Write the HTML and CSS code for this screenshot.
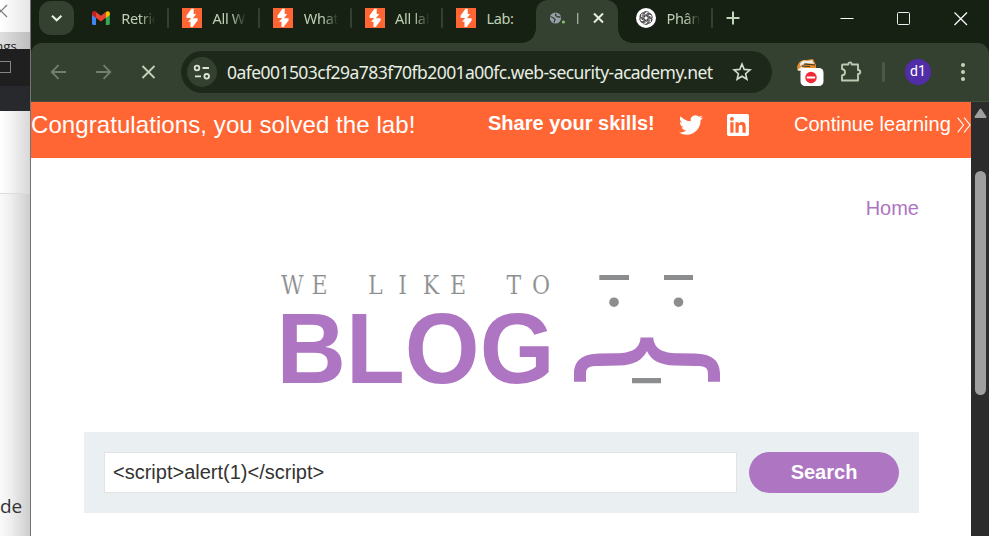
FILE: index.html
```
<!DOCTYPE html>
<html lang="en">
<head>
<meta charset="utf-8">
<title>We like to blog</title>
<link rel="stylesheet" href="styles.css">
</head>
<body>
<svg width="0" height="0" class="defs" aria-hidden="true">
  <symbol id="burp" viewBox="0 0 20 20">
    <rect width="20" height="20" fill="#ff6633"/>
    <path d="M9.5 .8h2.2V6h2.5l-3.2 4.2h4.6v2.3L10.6 19H8.5v-5.2H6l3.2-3.9H4.6V7.6z" fill="#fff"/>
  </symbol>
</svg>
<div class="screen">
  <aside class="behind">
    <div class="behind-tab"><svg width="10" height="20" viewBox="0 0 10 20"><path d="M-5 5 7 17M7 5-5 17" stroke="#777" stroke-width="1.2"/></svg></div>
    <div class="behind-bar"><span>ngs</span></div>
    <div class="behind-dark"><i></i></div>
    <div class="behind-dark2"></div>
    <div class="behind-top"></div>
    <div class="behind-page"><span>de</span></div>
  </aside>
  <main class="window">
    <div class="tabs">
      <div class="menu"><svg width="35" height="34" viewBox="0 0 35 34"><path d="M13 14.7 17.7 19.2 22.4 14.7" fill="none" stroke="#e6eedf" stroke-width="2.2"/></svg></div>
      <div class="tab"><svg class="fav" width="20" height="20" viewBox="0 0 20 20"><path d="M1 5v10.5Q1 17 2.5 17H5V8z" fill="#4285f4"/><path d="M14.8 8v9h2.6q1.4 0 1.4-1.5V5z" fill="#34a853"/><path d="M1 7V5.2C1 3 3.4 2.400 5 3.600V10z" fill="#c5221f"/><path d="M5 4 9.900 7.700 14.800 4V9.700L9.900 13.400 5 9.700z" fill="#ea4335"/><path d="M14.800 4C16.500 2.500 18.800 3 18.800 5.200V7L14.800 10z" fill="#fbbc04"/></svg><span class="title">Retriev</span><i class="sep"></i></div>
      <div class="tab"><svg class="fav" width="20" height="20"><use href="#burp"/></svg><span class="title">All We</span><i class="sep"></i></div>
      <div class="tab"><svg class="fav" width="20" height="20"><use href="#burp"/></svg><span class="title">What</span><i class="sep"></i></div>
      <div class="tab"><svg class="fav" width="20" height="20"><use href="#burp"/></svg><span class="title">All lab</span><i class="sep"></i></div>
      <div class="tab"><svg class="fav" width="20" height="20"><use href="#burp"/></svg><span class="title plain">Lab:</span></div>
      <div class="tab active">
        <svg width="82" height="43" viewBox="0 0 82 43"><circle cx="19.500" cy="18" r="5.600" fill="#98a0aa"/><path d="M14.500 16.500 17.500 18 19 19.500 18 22.500M20 13.500 19.500 15.500 22 17 24.500 17" fill="none" stroke="#344030" stroke-width="1.300"/><circle cx="27.400" cy="22" r="1.600" fill="#7cc96e"/><path d="M41.700 13V24" stroke="#aebba7" stroke-width="1.200"/><path d="M58 13.500 67 22.500M67 13.500 58 22.500" stroke="#e6eedf" stroke-width="2"/></svg>
      </div>
      <div class="tab last"><svg class="fav" width="20" height="20" viewBox="0 0 20 20"><circle cx="10" cy="10" r="10" fill="#fff"/><g fill="none" stroke="#222" stroke-width=".750"><path id="petal" d="M8 11.200V6.500Q8.200 4 10.500 3.700 12.500 3.700 13.400 5.200M8 7.600 11.800 5.400Q14.300 4.500 15.700 6.900"/><use href="#petal" transform="rotate(60 10 10)"/><use href="#petal" transform="rotate(120 10 10)"/><use href="#petal" transform="rotate(180 10 10)"/><use href="#petal" transform="rotate(240 10 10)"/><use href="#petal" transform="rotate(300 10 10)"/></g></svg><span class="title">Phân t</span><i class="sep"></i></div>
      <svg class="plus" width="16" height="16" viewBox="0 0 16 16"><path d="M8 1.500V14.500M1.500 8H14.500" stroke="#c3d5b9" stroke-width="2"/></svg>
      <svg class="controls" width="130" height="16" viewBox="0 0 130 16"><path d="M.500 8.500H13.500" stroke="#fff"/><rect x="57.500" y="2.500" width="12" height="12" rx="1" fill="none" stroke="#eee"/><path d="M114.500 2.500 127 15M127 2.500 114.500 15" stroke="#fff" stroke-width="1.200"/></svg>
    </div>
    <div class="toolbar">
      <svg class="nav" width="110" height="20" viewBox="0 0 110 20"><g fill="none" stroke-width="1.800"><path d="M16 10H2M8.500 3.200 1.700 10 8.500 16.800M46 10H60M53.500 3.200 60.300 10 53.500 16.800" stroke="#71806b"/><path d="M92.500 4 104.500 16M104.500 4 92.500 16" stroke="#c3d5b9"/></g></svg>
      <div class="address">
        <div class="site"><svg width="30" height="30" viewBox="0 0 30 30"><g fill="none" stroke="#dce5d6" stroke-width="1.800"><circle cx="10" cy="11" r="2.300"/><path d="M15.500 11H22M8 19.300H14"/><circle cx="19.700" cy="19.300" r="2.300"/></g></svg></div>
        <span class="url">0afe001503cf29a783f70fb2001a00fc.web-security-academy.net</span>
        <svg class="star" width="20" height="20" viewBox="0 0 20 20"><path d="M10 2 12.200 7.400 18 7.900 13.600 11.700 14.900 17.300 10 14.300 5.100 17.300 6.400 11.700 2 7.900 7.800 7.400z" fill="none" stroke="#d5ddd0" stroke-width="1.600"/></svg>
      </div>
      <svg class="ext" width="30" height="32" viewBox="0 0 30 32"><path d="M1 10Q3 2 10 3L17 2 20 8V14H2z" fill="#e98b2d"/><path d="M4 7Q6 2 11 4L16 3 18 7 10 6 4 9M1 13 5 10 9 11 6 14z" fill="#e5eef1"/><path d="M8 7 19 8M6 9 14 9.500" stroke="#343b2b" stroke-width="1.200"/><rect x="4.500" y="11" width="23" height="18" rx="4.500" fill="#fff"/><circle cx="15" cy="20.500" r="5.700" fill="#f12835"/><path d="M10.800 20.500H19.200" stroke="#fff" stroke-width="2"/></svg>
      <svg class="puzzle" width="22" height="22" viewBox="0 0 22 22"><path d="M3 3.500H8.300C8.300.700 11.700.700 11.700 3.500H18V9C21 9 21 13 18 13V19.500H2V14.500C6 14 6 8.500 2 8V4.500Q2 3.500 3 3.500z" fill="none" stroke="#b9ccaf" stroke-width="1.900" stroke-linejoin="round"/></svg>
      <i class="bar"></i>
      <div class="avatar">d1</div>
      <svg class="dots" width="6" height="20" viewBox="0 0 6 20" fill="#c3d5b9"><circle cx="3" cy="3" r="2"/><circle cx="3" cy="10" r="2"/><circle cx="3" cy="17" r="2"/></svg>
    </div>
    <div class="view">
      <div class="page">
        <header class="banner">
          <span class="solved">Congratulations, you solved the lab!</span>
          <span class="share">Share your skills!</span>
          <svg class="twitter" width="24" height="24" viewBox="0 0 24 24"><path fill="#fff" d="M23.950 4.570a10 10 0 0 1-2.820.770 4.960 4.960 0 0 0 2.160-2.720c-.950.550-2 .960-3.130 1.180a4.920 4.920 0 0 0-8.380 4.480C7.690 8.090 4.070 6.130 1.640 3.160a4.820 4.820 0 0 0-.670 2.480c0 1.710.870 3.210 2.190 4.100a4.900 4.900 0 0 1-2.230-.620v.060a4.920 4.920 0 0 0 3.950 4.830 5 5 0 0 1-2.210.080 4.940 4.940 0 0 0 4.600 3.420A9.870 9.870 0 0 1 0 19.540a14 14 0 0 0 7.550 2.210c9.050 0 14-7.500 14-13.980 0-.210 0-.420-.020-.630a9.940 9.940 0 0 0 2.420-2.570z"/></svg>
          <svg class="linkedin" width="22" height="22" viewBox="0 0 22 22"><rect width="22" height="22" rx="1.800" fill="#fff"/><g fill="#ff6633"><circle cx="4.900" cy="4.900" r="1.900"/><path d="M3.300 8.300H6.500V18.700H3.300zM8.500 8.300H11.600V9.700C12.300 8.500 13.500 8 14.900 8 18.100 8 18.700 10.200 18.700 13V18.700H15.500V13.600C15.500 12 15.300 10.800 13.700 10.800 12.100 10.800 11.700 12.100 11.700 13.600V18.700H8.500z"/></g></svg>
          <span class="continue">Continue learning</span>
          <svg class="chev" width="14" height="16" viewBox="0 0 14 16"><path d="M.700.700 6.500 8 .700 15.300M7.200.700 13 8 7.200 15.300" fill="none" stroke="#fff" stroke-width="1.100"/></svg>
        </header>
        <nav class="links"><a>Home</a></nav>
        <svg class="logo" width="440" height="120" viewBox="280 270 440 120">
          <text class="typed" y="294" transform="scale(.85 1)" x="343.900 376.100 410 441.500 473.800 507.100 538.800 570 604.700 636.500">WE LIKE TO</text>
          <text class="blog" x="276.500" y="383" textLength="278" lengthAdjust="spacingAndGlyphs">BLOG</text>
          <g fill="#8b8d8e"><path d="M599.300 275H629V280H599.300zM664 275H693V280H664zM632 378H661V383.200H632z"/><circle cx="614" cy="302.200" r="4.800"/><circle cx="678.500" cy="302.200" r="4.800"/></g>
          <path d="M640.500 337.500H653.300C654 348 661 353 678 353.300L695 353.600C712 354 720 361 720 374V381.700H708V374C708 367.500 705 366 695 366L675 365.600C659 365 651 360 647 351 642 360 635 365 619 365.600L599 366C589 366 586 367.500 586 374V381.700H574V374C574 361 582 354 599 353.600L616 353.300C633 353 640 348 640.500 337.500z" fill="#ae75c2"/>
        </svg>
        <section class="search">
          <div class="field">&lt;script&gt;alert(1)&lt;/script&gt;</div>
          <div class="button">Search</div>
        </section>
      </div>
      <div class="scroll"><svg width="13" height="11" viewBox="0 0 13 11"><path d="M6.500 1.500 11.500 9H1.500z" fill="#9f9f9f" stroke="#9f9f9f" stroke-width="2" stroke-linejoin="round"/></svg><div class="thumb"></div></div>
    </div>
  </main>
</div>
</body>
</html>
```
FILE: styles.css
```
* { box-sizing: border-box; }
body { margin: 0; overflow: hidden; font-family: "Liberation Sans", Arial, sans-serif; }
svg { display: block; flex: none; }
.defs { position: absolute; }
.screen { display: flex; width: 989px; height: 536px; background: #172113; }

.behind { width: 31px; flex: none; border-right: 1px solid #737373; overflow: hidden; font-family: "Open Sans", sans-serif; color: #333; }
.behind-tab { height: 32px; background: linear-gradient(90deg, #fff, #e6e6e6); }
.behind-bar { height: 17px; background: linear-gradient(90deg, #e0e0e0, #bebebe); overflow: hidden; }
.behind-bar span { display: block; margin-left: -5px; font-size: 13.500px; line-height: 28px; color: #222; }
.behind-dark { height: 37px; padding: 12px 0 0; background: #1f1f1f; }
.behind-dark i { display: block; width: 12px; height: 12px; margin-left: -1px; border: 1px solid #858585; }
.behind-dark2 { height: 25px; background: #28292c; }
.behind-top { height: 83px; background: linear-gradient(90deg, #fff, #f4f4f4 35%, #d8d8d8); border-bottom: 1px solid #dcdcdc; }
.behind-page { height: 342px; padding-top: 300px; background: linear-gradient(90deg, #fafafa, #efefef 35%, #cdcdcd); }
.behind-page span { display: block; font-size: 19px; line-height: 24px; }

.window { flex: 1; min-width: 0; display: flex; flex-direction: column; }
.tabs { display: flex; height: 43px; padding-left: 8px; font-family: "Noto Sans", sans-serif; }
.menu { width: 35px; height: 34px; margin: 1px 4.700px 0 0; border-radius: 12px; background: #344030; }
.tab { display: flex; width: 91.300px; flex: none; padding: 8px 1px 0 12px; }
.fav { margin-right: 10.500px; }
.title { width: 35px; height: 22px; overflow: hidden; white-space: nowrap; color: #bed0b4; font-size: 14.500px; line-height: 21px; letter-spacing: -.300px; -webkit-mask-image: linear-gradient(90deg, #000 55%, transparent 98%); mask-image: linear-gradient(90deg, #000 55%, transparent 98%); }
.title.plain { -webkit-mask-image: none; mask-image: none; }
.sep { width: 2px; height: 20px; margin-left: auto; border-radius: 1px; background: #344030; }
.active { position: relative; width: 82px; margin: 0 6px 0 .800px; padding: 0; border-radius: 12px 12px 0 0; background: #344030; }
.active::before, .active::after { content: ""; position: absolute; bottom: 0; width: 14px; height: 14px; }
.active::before { right: 100%; background: radial-gradient(circle at 0 0, transparent 13.500px, #344030 14px); }
.active::after { left: 100%; background: radial-gradient(circle at 100% 0, transparent 13.500px, #344030 14px); }
.last { width: 90px; }
.plus { margin: 10px 0 0 11px; }
.controls { margin: 10px 0 0 99px; }

.toolbar { display: flex; align-items: center; height: 59px; padding: 0 0 1px 19px; border-radius: 11px 11px 0 0; border-bottom: 1px solid #46503f; background: #344030; }
.nav { margin-right: 21px; }
.address { display: flex; align-items: center; width: 591px; height: 42px; padding-left: 6px; border-radius: 21px; background: #1d281a; }
.site { width: 30px; height: 30px; margin-right: 10px; border-radius: 50%; background: #344030; }
.url { width: 505px; white-space: nowrap; color: #e8eee4; font: 17.500px/26px "Noto Sans", sans-serif; letter-spacing: -.550px; }
.ext { margin: 3px 14px 0 24px; }
.puzzle { margin-right: 20px; }
.bar { width: 3px; height: 20px; margin-right: 20px; border-radius: 2px; background: #4b5845; }
.avatar { width: 26px; height: 26px; border-radius: 50%; background: #512da8; color: #fff; text-align: center; font: 14px/25px Roboto, sans-serif; }
.dots { margin-left: 29px; }

.view { display: flex; height: 434px; }
.page { width: 940px; background: #fff; }
.banner { display: flex; height: 56px; background: #ff6633; color: #fff; white-space: nowrap; }
.solved { width: 457px; font-size: 24px; line-height: 46px; letter-spacing: .080px; }
.share { width: 191px; font-size: 20px; font-weight: 700; line-height: 42px; }
.twitter { margin: 11px 24px 0 0; }
.linkedin { margin: 12px 45px 0 0; }
.continue { width: 163px; font-size: 20px; line-height: 44px; }
.chev { margin-top: 15px; }
.links { padding: 38px 52px 0; text-align: right; font-size: 20px; line-height: 24px; color: #ae75c2; }
.logo { margin: 50px 0 0 249px; }
.typed { font-family: "DejaVu Serif", serif; font-size: 26px; fill: #8b8d8e; stroke: #fff; stroke-width: .200px; text-anchor: middle; }
.blog { font-family: "Liberation Sans", sans-serif; font-weight: 700; font-size: 100px; fill: #ae75c2; }
.search { display: flex; gap: 12px; width: 835px; height: 81px; margin: 42px 0 0 53px; padding: 20px; background: #eaeff2; }
.field { width: 633px; height: 41px; padding-left: 8px; border: 1px solid #e3e3e3; background: #fff; color: #333332; font-size: 20px; line-height: 38px; }
.button { width: 150px; height: 41px; border-radius: 20.500px; background: #ae75c2; color: #fff; text-align: center; font-size: 20px; font-weight: 700; line-height: 40px; }
.scroll { width: 18px; padding: 6px 0 0 3px; background: #2c2c2c; }
.thumb { width: 11px; height: 224px; margin: 52px 0 0 1px; border-radius: 6px; background: #9f9f9f; }
```
